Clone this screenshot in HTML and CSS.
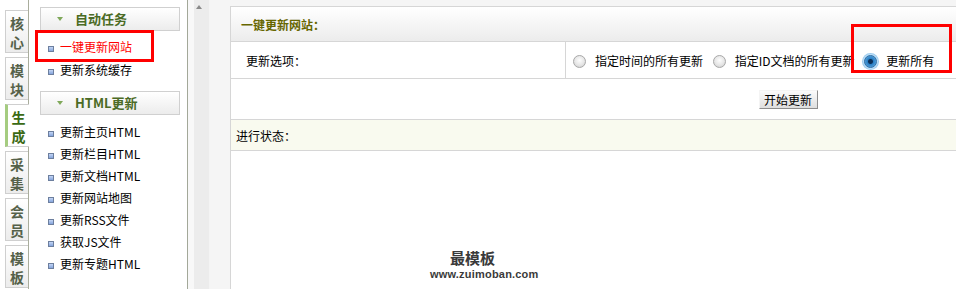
FILE: index.html
```html
<!DOCTYPE html>
<html lang="zh-CN">
<head>
  <meta charset="UTF-8">
  <title>一键更新网站</title>
  <link rel="stylesheet" href="styles.css">
</head>
<body>
  <div class="frame">
    <div class="tabs">
      <div class="tab">核<br>心</div>
      <div class="tab">模<br>块</div>
      <div class="tab active">生<br>成</div>
      <div class="tab">采<br>集</div>
      <div class="tab">会<br>员</div>
      <div class="tab">模<br>板</div>
    </div>

    <div class="menu">
      <div class="menu-head"><span class="arrow"></span>自动任务</div>
      <ul class="menu-list first">
        <li class="current">一键更新网站</li>
        <li>更新系统缓存</li>
      </ul>
      <div class="menu-head"><span class="arrow"></span>HTML更新</div>
      <ul class="menu-list">
        <li>更新主页HTML</li>
        <li>更新栏目HTML</li>
        <li>更新文档HTML</li>
        <li>更新网站地图</li>
        <li>更新RSS文件</li>
        <li>获取JS文件</li>
        <li>更新专题HTML</li>
      </ul>
    </div>

    <div class="scrollbar"><span class="up"></span></div>

    <div class="main">
      <div class="panel">
        <table class="form">
          <tr>
            <th colspan="2">一键更新网站：</th>
          </tr>
          <tr class="row-options">
            <td class="label">更新选项：</td>
            <td class="options">
              <span class="radio"></span><span class="opt">指定时间的所有更新</span>
              <span class="radio"></span><span class="opt">指定ID文档的所有更新</span>
              <span class="radio checked"></span><span class="opt">更新所有</span>
            </td>
          </tr>
          <tr class="row-actions">
            <td colspan="2"><button class="btn">开始更新</button></td>
          </tr>
          <tr class="row-status">
            <td colspan="2">进行状态：</td>
          </tr>
        </table>
      </div>
    </div>
  </div>

  <!-- red annotation boxes -->
  <div class="mark mark-menu"></div>
  <div class="mark mark-option"></div>

  <div class="watermark">
    <div class="wm-title">最模板</div>
    <div class="wm-url">www.zuimoban.com</div>
  </div>
</body>
</html>
```

FILE: styles.css
```css
body {
  margin: 0;
  height: 289px;
  overflow: hidden;
  background: #fff;
  font-family: "Noto Sans CJK SC", "Liberation Sans", sans-serif;
  font-size: 12px;
  color: #000;
  position: relative;
}
.frame {
  display: flex;
  height: 289px;
}

/* left tabs */
.tabs {
  width: 28px;
  flex: none;
  border-right: 1px solid #a9ad9c;
  padding-top: 10px;
  background: #fff;
}
.tab {
  box-sizing: border-box;
  margin-left: 5px;
  width: 23px;
  height: 43px;
  margin-bottom: 4px;
  padding-top: 3px;
  border: 1px solid #cfcfcf;
  border-right: none;
  background: linear-gradient(#fff, #ececec);
  font-size: 14px;
  font-weight: bold;
  line-height: 19px;
  text-align: center;
  color: #556149;
}
.tab.active {
  width: 24px;
  margin-right: -1px;
  position: relative;
  border-left: 3px solid #a5cc80;
  background: #fff;
  color: #3b6a14;
}

/* left menu */
.menu {
  width: 158px;
  flex: none;
  border-right: 1px solid #a3a899;
  background: #fff;
}
.menu-head {
  box-sizing: border-box;
  margin: 7px 0 0 11px;
  width: 140px;
  height: 24px;
  padding-left: 16px;
  border: 1px solid #d0d0d0;
  background: linear-gradient(#fff, #ececec);
  font-size: 13px;
  font-weight: bold;
  line-height: 21px;
  color: #4b6b25;
}
.menu-list + .menu-head {
  margin-top: 0;
}
.arrow {
  display: inline-block;
  vertical-align: middle;
  margin: -2px 12px 0 0;
  border-left: 3px solid transparent;
  border-right: 3px solid transparent;
  border-top: 4px solid #7fa85a;
}
.menu-list {
  list-style: none;
  margin: 0;
  padding: 6px 0 0 19px;
}
.menu-list.first {
  padding: 4px 0 10px 19px;
}
.menu-list li {
  height: 22px;
  line-height: 22px;
  white-space: nowrap;
}
.menu-list.first li {
  height: 23px;
  line-height: 23px;
}
.menu-list li::before {
  content: "";
  display: inline-block;
  box-sizing: border-box;
  width: 6px;
  height: 6px;
  margin-right: 6px;
  vertical-align: middle;
  border: 1px solid #6d7f9e;
  background: linear-gradient(#c4d6f5, #84a4dc);
}
.menu-list li.current {
  color: #f00;
}

/* fake scrollbar strip */
.scrollbar {
  width: 22px;
  flex: none;
  background: linear-gradient(to right, #f8f8f8 0 6px, #ececec 6px 21px, #f4f4f4 21px);
  position: relative;
}
.scrollbar .up {
  position: absolute;
  left: 8px;
  top: 5px;
  border-left: 3px solid transparent;
  border-right: 3px solid transparent;
  border-bottom: 4px solid #8a8a8a;
}

/* main area */
.main {
  flex: 1;
  overflow: hidden;
  background: #f5f5f5;
  padding: 6px 0 0 20px;
}
.panel {
  width: 1114px;
  height: 100%;
  border: 1px solid #d6d6d6;
  background: #fff;
}
.form {
  width: 100%;
  border-collapse: collapse;
}
.form th {
  height: 34px;
  padding: 0 0 0 10px;
  text-align: left;
  font-size: 12px;
  font-weight: bold;
  color: #666600;
  background: linear-gradient(#fff, #ececec);
  border-bottom: 1px solid #d6d6d6;
}
.form td {
  padding: 0;
}
.row-options td {
  height: 36px;
  border-bottom: 1px solid #d6d6d6;
}
.row-options .label {
  width: 319px;
  padding-left: 15px;
  border-right: 1px solid #d6d6d6;
}
.row-options .options {
  padding-left: 7px;
  white-space: nowrap;
}
.radio {
  display: inline-block;
  box-sizing: border-box;
  width: 13px;
  height: 13px;
  margin-right: 9px;
  vertical-align: -2px;
  border: 1px solid #a9a9a9;
  border-radius: 50%;
  background: radial-gradient(circle at 50% 40%, #fdfdfd 0, #e6e6e6 55%, #c9c9c9 100%);
}
.radio.checked {
  border-color: #2f6fa6;
  background: radial-gradient(circle, #0b2f57 0 2px, #2a7fc4 3px, #6fb3e6 100%);
  box-shadow: 0 0 0 1px #bfe0f8, 0 0 0 2px #9fcdef;
}
.opt {
  margin-right: 7px;
}
.row-actions td {
  height: 40px;
  text-align: center;
  border-bottom: 1px solid #d6d6d6;
}
.btn {
  box-sizing: border-box;
  width: 59px;
  height: 19px;
  padding: 0;
  margin-top: 1px;
  font-family: "Noto Sans CJK SC", sans-serif;
  font-size: 12px;
  line-height: 15px;
  color: #000;
  border: 1px solid;
  border-color: #f4f4f4 #8d8d8d #8d8d8d #f4f4f4;
  background: linear-gradient(#fbfbfb, #dedede);
}
.row-status td {
  height: 30px;
  padding-left: 5px;
  background: #f9faef;
  border-bottom: 1px solid #d6d6d6;
}

/* annotations */
.mark {
  position: absolute;
  box-sizing: border-box;
  border: 3px solid #f00;
}
.mark-menu {
  left: 35px;
  top: 30px;
  width: 119px;
  height: 32px;
}
.mark-option {
  left: 851px;
  top: 24px;
  width: 101px;
  height: 49px;
}

.watermark {
  position: absolute;
  left: 430px;
  top: 248px;
  width: 100px;
  text-align: center;
  color: #3a3a3a;
}
.wm-title {
  font-size: 15px;
  font-weight: bold;
  line-height: 20px;
  padding-right: 15px;
}
.wm-url {
  font-family: "Liberation Sans", sans-serif;
  font-size: 11px;
  font-weight: bold;
  line-height: 13px;
  letter-spacing: 0.2px;
}
```
